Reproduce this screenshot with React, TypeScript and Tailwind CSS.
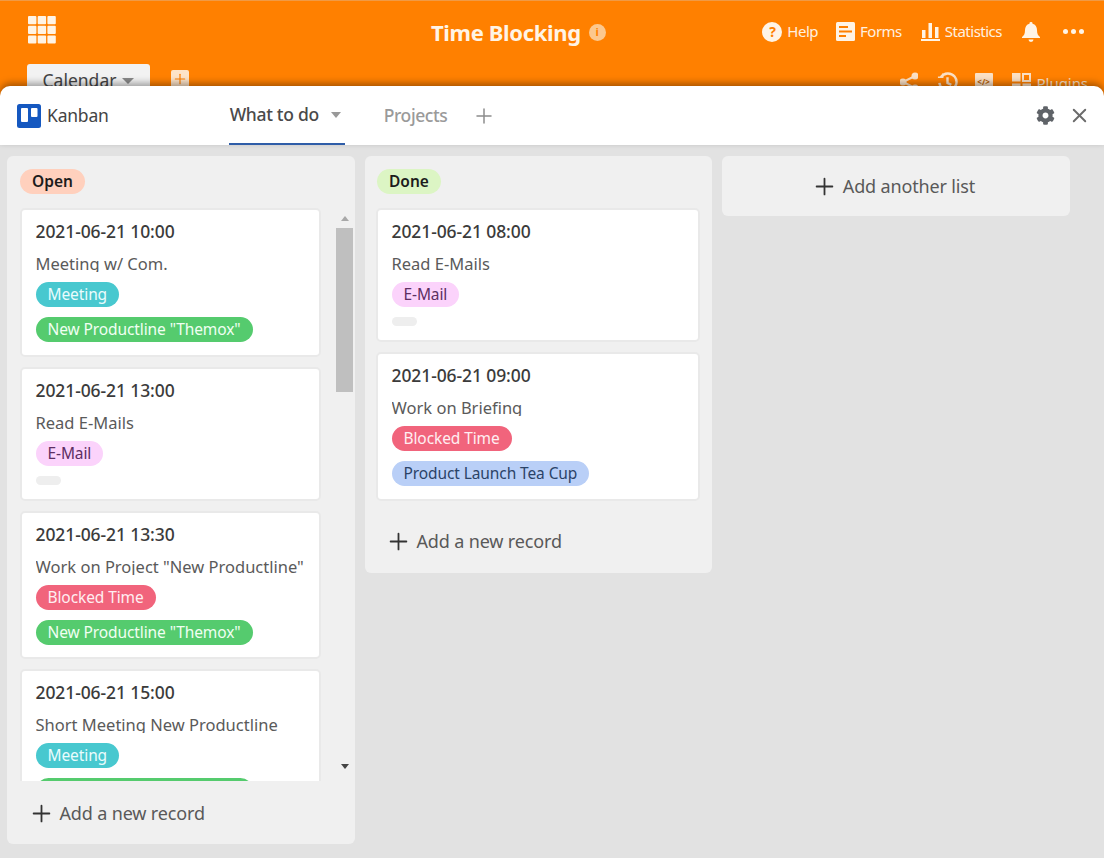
import React from "react";
import { X, Plus } from "lucide-react";
import { FaCog } from "react-icons/fa";

const font = "font-['Noto_Sans','Open_Sans',sans-serif]";

function Tag({ label, cls }: { label: string; cls: string }) {
  return (
    <div className={`h-[25px] rounded-full px-3 flex items-center text-[15.5px] leading-none whitespace-nowrap tracking-[-0.1px] ${cls}`}>
      {label}
    </div>
  );
}

const tagStyles: Record<string, string> = {
  meeting: "bg-[#48c8cf] text-[#eafcfd]",
  themox: "bg-[#55cb6e] text-[#f0fff2]",
  email: "bg-[#fbd3fb] text-[#5d2f63]",
  blocked: "bg-[#f1647c] text-[#ffeef1]",
  tea: "bg-[#b9cff7] text-[#2b4367]",
};

type CardData = { date: string; title: string; tags: [string, string][]; empty?: boolean; h: string };

function Card({ c }: { c: CardData }) {
  return (
    <div className={`${c.h} shrink-0 bg-white rounded-[5px] border-2 border-[#e9e9e9] pl-[13.5px] pr-2 overflow-hidden`}>
      <div className="mt-[9px] h-[24px] text-[17.5px] leading-[24px] font-medium text-[#3b3b3b] tracking-[-0.1px] whitespace-nowrap">{c.date}</div>
      <div className="mt-[9px] h-[20px] text-[16.5px] leading-[24px] text-[#5a5a5a] whitespace-nowrap overflow-hidden">{c.title}</div>
      <div className="mt-[10px] flex flex-col items-start gap-[10px]">
        {c.tags.map(([l, k]) => (
          <Tag key={l} label={l} cls={tagStyles[k]} />
        ))}
        {c.empty && <div className="w-[25px] h-[9px] rounded-full bg-[#eeeeee]" />}
      </div>
    </div>
  );
}

const THEMOX = 'New Productline "Themox"';

const open: CardData[] = [
  { date: "2021-06-21 10:00", title: "Meeting w/ Com.", tags: [["Meeting", "meeting"], [THEMOX, "themox"]], h: "h-[149px]" },
  { date: "2021-06-21 13:00", title: "Read E-Mails", tags: [["E-Mail", "email"]], empty: true, h: "h-[134px]" },
  { date: "2021-06-21 13:30", title: 'Work on Project "New Productline"', tags: [["Blocked Time", "blocked"], [THEMOX, "themox"]], h: "h-[148px]" },
  { date: "2021-06-21 15:00", title: "Short Meeting New Productline", tags: [["Meeting", "meeting"], [THEMOX, "themox"]], h: "h-[149px]" },
];
const done: CardData[] = [
  { date: "2021-06-21 08:00", title: "Read E-Mails", tags: [["E-Mail", "email"]], empty: true, h: "h-[134px]" },
  { date: "2021-06-21 09:00", title: "Work on Briefing", tags: [["Blocked Time", "blocked"], ["Product Launch Tea Cup", "tea"]], h: "h-[149px]" },
];

function Badge({ label, cls }: { label: string; cls: string }) {
  return (
    <div className={`inline-flex h-[25px] items-center rounded-full px-3 text-[15.5px] font-semibold text-[#1c1c1c] ${cls}`}>{label}</div>
  );
}

function AddRow({ label }: { label: string }) {
  return (
    <div className="flex items-center gap-[5px] text-[18px] text-[#595959] tracking-[-0.15px]">
      <Plus size={27} strokeWidth={1.6} className="text-[#333]" />
      <span>{label}</span>
    </div>
  );
}

function HeaderItem({ icon, label }: { icon: React.ReactNode; label: string }) {
  return (
    <div className="flex items-center gap-[5px] text-[15px] text-[#fff1e0] tracking-[-0.5px]">
      {icon}
      <span>{label}</span>
    </div>
  );
}

export default function App() {
  return (
    <div className={`${font} w-[1104px] h-[858px] overflow-hidden flex flex-col bg-[#e2e2e2]`}>
      {/* Orange app header */}
      <div className="h-[96px] shrink-0 bg-[#ff8000] border-t border-[#f09a45] flex flex-col overflow-hidden">
        <div className="h-[63px] shrink-0 flex items-center pl-[28px] pr-[20px]">
          <svg width="28" height="28" viewBox="0 0 28 28" className="mb-[6px]">
            {[0, 9.7, 19.4].flatMap((y) =>
              [0, 9.7, 19.4].map((x) => <rect key={`${x}-${y}`} x={x} y={y} width="8.4" height="8.2" rx="1" fill="#fff4e6" />)
            )}
          </svg>
          <div className="ml-[375px] flex items-center gap-[8px]">
            <span className="text-[22px] font-bold text-[#fff4e6] tracking-[-0.35px]">Time Blocking</span>
            <span className="w-[17px] h-[17px] rounded-full bg-[#fcc88e] text-[#ff8000] text-[11px] font-bold flex items-center justify-center">i</span>
          </div>
          <div className="ml-auto flex items-center mb-[2px]">
            <HeaderItem
              label="Help"
              icon={
                <span className="w-[20px] h-[20px] rounded-full bg-[#fff4e6] text-[#ff8000] text-[14px] font-bold flex items-center justify-center">?</span>
              }
            />
            <div className="w-[18px]" />
            <HeaderItem
              label="Forms"
              icon={
                <svg width="19" height="19" viewBox="0 0 19 19">
                  <rect width="19" height="19" rx="1.5" fill="#fff4e6" />
                  <path d="M3 5h9M3 9.500h13M3 14h7" stroke="#ff8000" strokeWidth="1.8" />
                </svg>
              }
            />
            <div className="w-[19px]" />
            <HeaderItem
              label="Statistics"
              icon={
                <svg width="19" height="19" viewBox="0 0 19 19" fill="#fff4e6">
                  <rect x="1" y="8" width="3.500" height="8" />
                  <rect x="7.500" y="1" width="3.500" height="15" />
                  <rect x="14" y="5" width="3.500" height="11" />
                  <rect x="0" y="17" width="19" height="2" />
                </svg>
              }
            />
            <div className="w-[20px]" />
            <svg width="18" height="20" viewBox="0 0 18 20" fill="#fff4e6">
              <path d="M9 0a1.500 1.500 0 0 1 1.500 1.700C13.500 2.400 15 5 15 8c0 4 1 5.500 3 7v1H0v-1c2-1.500 3-3 3-7 0-3 1.500-5.600 4.500-6.300A1.500 1.500 0 0 1 9 0ZM6.500 17.500h5a2.500 2.500 0 0 1-5 0Z" />
            </svg>
            <div className="w-[23px] flex-none" />
            <div className="flex gap-[3px]">
              <span className="w-[5px] h-[5px] rounded-full bg-[#fff4e6]" />
              <span className="w-[5px] h-[5px] rounded-full bg-[#fff4e6]" />
              <span className="w-[5px] h-[5px] rounded-full bg-[#fff4e6]" />
            </div>
          </div>
        </div>
        <div className="flex items-start pl-[27px] pr-[16px]">
          <div className="w-[123px] h-[30px] bg-[#f2f2f2] rounded-t-[3px] flex items-center justify-center gap-[6px] text-[17.5px] text-[#444] pt-[2px]">
            <span>Calendar</span>
            <span className="w-0 h-0 border-x-[6px] border-x-transparent border-t-[6px] border-t-[#888] mt-[2px]" />
          </div>
          <div className="ml-[21px] mt-[6px] w-[18px] h-[18px] bg-[#fde3c8] rounded-[2px] flex items-center justify-center">
            <Plus size={16} strokeWidth={1.8} className="text-[#ff8000]" />
          </div>
          <div className="ml-auto flex items-center mt-[6px]">
            <svg width="18" height="20" viewBox="0 0 18 20" fill="none" stroke="#fbe0c4" strokeWidth="2">
              <circle cx="15" cy="4" r="2.500" fill="#fbe0c4" />
              <circle cx="3" cy="10" r="2.500" fill="#fbe0c4" />
              <circle cx="15" cy="16" r="2.500" fill="#fbe0c4" />
              <path d="M15 4 3 10l12 6" />
            </svg>
            <svg width="21" height="22" viewBox="0 0 22 22" fill="none" stroke="#fbe0c4" strokeWidth="2.500" className="ml-[19px]">
              <path d="M4 6a9 9 0 1 1-1.500 6" />
              <path d="M1 6h5V2" strokeWidth="1.500" />
              <path d="M11 6v6l4 2" />
            </svg>
            <div className="ml-[17px] w-[18px] h-[18px] bg-[#fbe0c4] rounded-[1px] flex items-center justify-center text-[8px] font-bold text-[#b85c00]">&lt;/&gt;</div>
            <div className="flex items-center gap-[6px] ml-[19px]">
              <svg width="19" height="19" viewBox="0 0 19 19" fill="#fbe0c4">
                <rect width="8.500" height="8.500" />
                <rect x="11" y="1" width="7" height="7" fill="none" stroke="#fbe0c4" strokeWidth="2" />
                <rect y="10.500" width="8.500" height="8.500" />
                <rect x="10.500" y="10.500" width="8.500" height="8.500" />
              </svg>
              <span className="text-[15px] text-[#fbe0c4] pt-[2px] tracking-[-0.05px]">Plugins</span>
            </div>
          </div>
        </div>
      </div>

      {/* Kanban plugin */}
      <div className="-mt-[10px] h-[59px] shrink-0 bg-white rounded-t-[10px] shadow-[0_-3px_7px_rgba(0,0,0,0.35)] flex items-center pl-[17px] pr-[15px] relative">
        <svg width="24" height="24" viewBox="0 0 24 24" className="mr-[6px]">
          <rect width="24" height="24" rx="2.500" fill="#1558c0" />
          <rect x="4" y="4" width="7" height="14" rx="1" fill="#fff" />
          <rect x="14" y="4" width="6.500" height="9" rx="1" fill="#fff" />
        </svg>
        <span className="text-[17.500px] text-[#444] tracking-[-0.2px]">Kanban</span>
        <div className="ml-[120px] self-stretch w-[116px] flex items-center gap-[12px] border-b-2 border-[#2f5da8] text-[17.500px] font-medium text-[#4a4a4a] tracking-[-0.3px] pl-[1px] whitespace-nowrap">
          <span>What to do</span>
          <span className="w-0 h-0 border-x-[5.500px] border-x-transparent border-t-[6px] border-t-[#999]" />
        </div>
        <span className="ml-[39px] text-[17.500px] font-medium text-[#9a9a9a] tracking-[-0.4px]">Projects</span>
        <Plus size={24} strokeWidth={1.5} className="ml-[25px] text-[#8c8c8c]" />
        <FaCog size={19} className="ml-auto text-[#5f6368]" />
        <X size={23} strokeWidth={2} className="ml-[13px] -mr-[2px] text-[#6b6b6b]" />
      </div>

      {/* Board */}
      <div className="flex-1 flex items-start gap-[10px] pl-[7px] pt-[11px]">
        <div className="w-[348px] h-[688px] bg-[#f0f0f0] rounded-[6px] flex flex-col pl-[13px]">
          <div className="pt-[13px] h-[52px] shrink-0">
            <Badge label="Open" cls="bg-[#ffd0bd]" />
          </div>
          <div className="h-[573px] flex overflow-hidden shrink-0">
            <div className="w-[301px] flex flex-col gap-[10px] overflow-hidden">
              {open.map((c) => (
                <Card key={c.date} c={c} />
              ))}
            </div>
            <div className="ml-[15px] w-[17px] flex flex-col items-center pt-[8px]">
              <span className="w-0 h-0 border-x-[4.500px] border-x-transparent border-b-[5px] border-b-[#a8a8a8]" />
              <div className="mt-[7px] w-[17px] h-[164px] bg-[#bfbfbf]" />
              <span className="mt-[372px] w-0 h-0 border-x-[4.500px] border-x-transparent border-t-[5px] border-t-[#444]" />
            </div>
          </div>
          <div className="flex-1 flex items-center pl-[7.5px] pt-[1px]">
            <AddRow label="Add a new record" />
          </div>
        </div>

        <div className="w-[347px] h-[417px] bg-[#f0f0f0] rounded-[6px] flex flex-col pl-[11px] pr-[12px]">
          <div className="pt-[13px] pl-[1px] h-[52px] shrink-0">
            <Badge label="Done" cls="bg-[#dcf5c4]" />
          </div>
          <div className="flex flex-col gap-[10px]">
            {done.map((c) => (
              <Card key={c.date} c={c} />
            ))}
          </div>
          <div className="flex-1 flex items-center pl-[8.5px] pt-[8px]">
            <AddRow label="Add a new record" />
          </div>
        </div>

        <div className="w-[348px] h-[60px] bg-[#f0f0f0] rounded-[6px] flex items-center justify-center pr-[6px]">
          <AddRow label="Add another list" />
        </div>
      </div>
    </div>
  );
}
